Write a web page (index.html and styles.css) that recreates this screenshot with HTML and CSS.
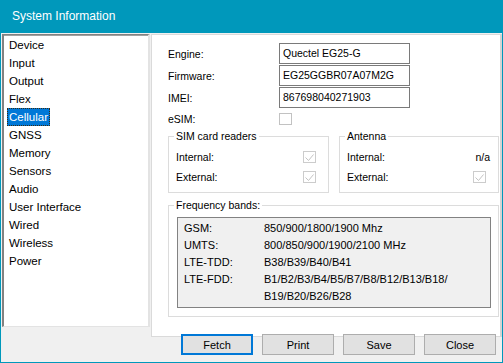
FILE: index.html
```html
<!DOCTYPE html>
<html>
  <head>
    <title>System Information</title>
    <link rel="stylesheet" href="styles.css">
  </head>
  <body>
    <div class="window">
      <div class="titlebar">System Information</div>

      <div class="main">
        <ul class="nav-list">
          <li><span>Device</span></li>
          <li><span>Input</span></li>
          <li><span>Output</span></li>
          <li><span>Flex</span></li>
          <li class="selected"><span>Cellular</span></li>
          <li><span>GNSS</span></li>
          <li><span>Memory</span></li>
          <li><span>Sensors</span></li>
          <li><span>Audio</span></li>
          <li><span>User Interface</span></li>
          <li><span>Wired</span></li>
          <li><span>Wireless</span></li>
          <li><span>Power</span></li>
        </ul>

        <div class="panel">
          <div class="fields">
            <span class="label">Engine:</span>
            <div class="textbox">Quectel EG25-G</div>
            <span class="label">Firmware:</span>
            <div class="textbox">EG25GGBR07A07M2G</div>
            <span class="label">IMEI:</span>
            <div class="textbox">867698040271903</div>
            <span class="label">eSIM:</span>
            <span class="check"></span>
          </div>

          <div class="group-row">
            <fieldset class="group">
              <legend>SIM card readers</legend>
              <div class="check-row">
                <span>Internal:</span>
                <span class="check"><svg width="11" height="11" viewBox="0 0 11 11"><path d="M1.5 5.5 L4.5 8.5 L9.5 2.5" fill="none" stroke="#c4c4c4" stroke-width="1"/></svg></span>
              </div>
              <div class="check-row">
                <span>External:</span>
                <span class="check"><svg width="11" height="11" viewBox="0 0 11 11"><path d="M1.5 5.5 L4.5 8.5 L9.5 2.5" fill="none" stroke="#c4c4c4" stroke-width="1"/></svg></span>
              </div>
            </fieldset>

            <fieldset class="group">
              <legend>Antenna</legend>
              <div class="check-row">
                <span>Internal:</span>
                <span class="value">n/a</span>
              </div>
              <div class="check-row">
                <span>External:</span>
                <span class="check"><svg width="11" height="11" viewBox="0 0 11 11"><path d="M1.5 5.5 L4.5 8.5 L9.5 2.5" fill="none" stroke="#c4c4c4" stroke-width="1"/></svg></span>
              </div>
            </fieldset>
          </div>

          <fieldset class="group freq">
            <legend>Frequency bands:</legend>
            <div class="bands">
              <span>GSM:</span><span>850/900/1800/1900 Mhz</span>
              <span>UMTS:</span><span>800/850/900/1900/2100 MHz</span>
              <span>LTE-TDD:</span><span>B38/B39/B40/B41</span>
              <span>LTE-FDD:</span><span>B1/B2/B3/B4/B5/B7/B8/B12/B13/B18/<br>B19/B20/B26/B28</span>
            </div>
          </fieldset>
        </div>
      </div>

      <div class="footer">
        <button class="btn default">Fetch</button>
        <button class="btn">Print</button>
        <button class="btn">Save</button>
        <button class="btn">Close</button>
      </div>
    </div>
  </body>
</html>
```

FILE: styles.css
```css
body {
    margin: 0;
    font-family: "Liberation Sans", Arial, sans-serif;
    font-size: 10.5px;
    color: #000;
}
.window {
    width: 503px;
    height: 363px;
    box-sizing: border-box;
    border: 1px solid #0098bb;
    border-top: none;
    background: #f0f0f0;
    display: flex;
    flex-direction: column;
}
.titlebar {
    height: 33px;
    margin: 0 -1px;
    background: #0098bb;
    color: #fff;
    font-size: 12px;
    line-height: 33px;
    padding-left: 12px;
}
.main {
    display: flex;
    gap: 1px;
    padding: 1px 0 0 1px;
    height: 293px;
}

/* list on the left */
.nav-list {
    list-style: none;
    margin: 0;
    padding: 0 0 0 3px;
    width: 141px;
    background: #fff;
    border-style: solid;
    border-width: 1px 2px 1px 2px;
    border-color: #828282 #e3e3e3 #e3e3e3 #828282;
    box-shadow: inset 0 1px 0 #a0a0a0;
    font-size: 11.5px;
}
.nav-list li {
    height: 18px;
    line-height: 18px;
}
.nav-list li:first-child {
    margin-top: 1px;
}
.nav-list span {
    display: inline-block;
    padding: 0 2px;
    height: 18px;
    box-sizing: border-box;
}
.nav-list .selected span {
    background: #0078d7;
    color: #fff;
    outline: 1px dotted #3a2a10;
    outline-offset: -1px;
}

/* right panel */
.panel {
    flex: 1;
    background: #fff;
    border: 1px solid #dadada;
    border-right: 2px solid #d4d4d4;
    padding: 8px 0 0 16px;
    height: 293px;
}
.fields {
    display: grid;
    grid-template-columns: 111px 131px;
    grid-template-rows: 21px 21px 21px 19px;
    row-gap: 1px;
    align-items: center;
}
.textbox {
    height: 21px;
    box-sizing: border-box;
    border: 1px solid #7a7a7a;
    padding-left: 3px;
    line-height: 19px;
}
.check {
    display: inline-flex;
    align-items: center;
    justify-content: center;
    width: 13px;
    height: 12px;
    box-sizing: border-box;
    border: 1px solid #cccccc;
    background: #fff;
}
.fields .check {
    border-color: #c2c2c2;
}

.group-row {
    display: grid;
    grid-template-columns: 161px 160px;
    column-gap: 10px;
    margin-top: 2px;
}
.group {
    margin: 0;
    padding: 5px 12px 5px 7px;
    min-inline-size: 0;
    border: 1px solid #dcdcdc;
}
.group legend {
    padding: 0 2px;
    margin-left: -2px;
    line-height: 12px;
}
.check-row {
    display: flex;
    justify-content: space-between;
    align-items: center;
    height: 20px;
}
.check-row .value {
    margin-right: -4px;
}

.freq {
    width: 331px;
    box-sizing: border-box;
    margin-top: 6px;
    padding: 6px 7px 8px 8px;
}
.freq legend {
    margin-left: -3px;
}
.bands {
    display: grid;
    grid-template-columns: 80px auto;
    background: #f0f0f0;
    border: 1px solid #828282;
    padding: 2px 0 2px 6px;
    font-size: 11px;
    line-height: 17px;
}

/* buttons at the bottom */
.footer {
    display: flex;
    justify-content: flex-end;
    gap: 9px;
    padding: 7px 6px 0 0;
}
.btn {
    width: 72px;
    height: 21px;
    background: #e1e1e1;
    border: 1px solid #adadad;
    font-family: "Liberation Sans", Arial, sans-serif;
    font-size: 11px;
    color: #000;
    padding: 0;
}
.btn.default {
    border: 2px solid #0078d7;
}
```
